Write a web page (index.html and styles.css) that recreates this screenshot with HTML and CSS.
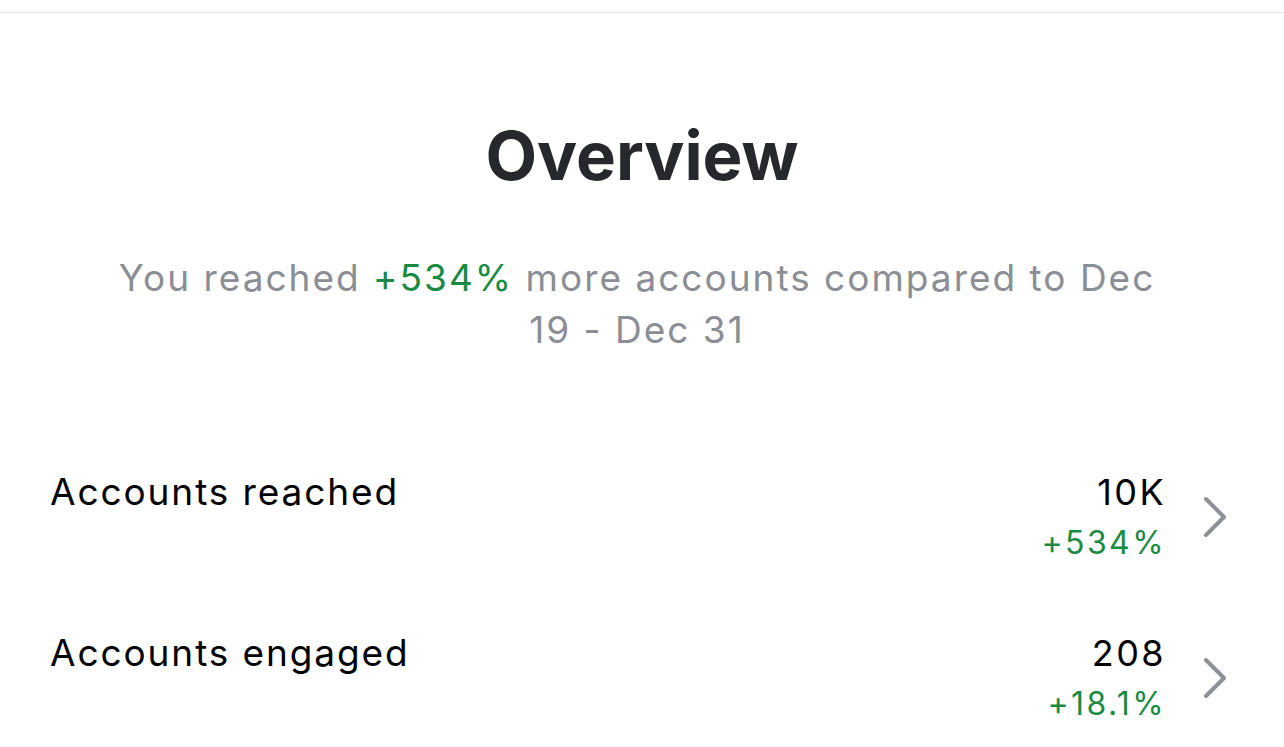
FILE: index.html
```html
<!DOCTYPE html>
<html>
<head>
<meta charset="utf-8">
<link rel="stylesheet" href="styles.css">
</head>
<body>
<div class="topbar"></div>
<main class="overview">
  <h1 class="title">Overview</h1>
  <p class="summary">You reached <span class="up">+534%</span> more accounts compared to Dec 19 - Dec 31</p>
  <ul class="metrics">
    <li class="metric">
      <span class="label">Accounts reached</span>
      <div class="values">
        <span class="value">10K</span>
        <span class="delta up">+534%</span>
      </div>
      <svg class="chev" width="26" height="42" viewBox="0 0 26 42"><path d="M4 3 L22 21 L4 39" fill="none" stroke="#8e9096" stroke-width="4" stroke-linecap="round" stroke-linejoin="round"/></svg>
    </li>
    <li class="metric">
      <span class="label">Accounts engaged</span>
      <div class="values">
        <span class="value">208</span>
        <span class="delta up">+18.1%</span>
      </div>
      <svg class="chev" width="26" height="42" viewBox="0 0 26 42"><path d="M4 3 L22 21 L4 39" fill="none" stroke="#8e9096" stroke-width="4" stroke-linecap="round" stroke-linejoin="round"/></svg>
    </li>
  </ul>
</main>
</body>
</html>
```
FILE: styles.css
```css
html, body {
  margin: 0;
  padding: 0;
  background: #ffffff;
  font-family: Inter, "Noto Sans", sans-serif;
}
.topbar {
  height: 12px;
  border-bottom: 1px solid #e4e6e5;
}
.overview {
  padding: 0 50px;
}
.title {
  margin: 103px 0 0;
  text-align: center;
  font-size: 67px;
  line-height: 80px;
  font-weight: 700;
  color: #26282c;
}
.summary {
  margin: 56px auto 0;
  width: 1060px;
  padding-right: 10px;
  text-align: center;
  font-size: 37px;
  line-height: 52px;
  letter-spacing: 2px;
  color: #8b8e94;
}
.up {
  color: #1a8a43;
}
.metrics {
  list-style: none;
  margin: 112px 0 0;
  padding: 0;
  display: flex;
  flex-direction: column;
  gap: 63px;
}
.metric {
  display: flex;
  align-items: flex-start;
}
.label {
  flex: 1;
  font-size: 37px;
  line-height: 48px;
  letter-spacing: 1.9px;
  color: #000;
}
.values {
  display: flex;
  flex-direction: column;
  align-items: flex-end;
}
.value {
  font-size: 36px;
  line-height: 48px;
  letter-spacing: 2.4px;
  color: #000;
}
.delta {
  padding-top: 3px;
  font-size: 32px;
  line-height: 47px;
  letter-spacing: 2.4px;
}
.chev {
  margin: 28px 6px 0 36px;
}
```
